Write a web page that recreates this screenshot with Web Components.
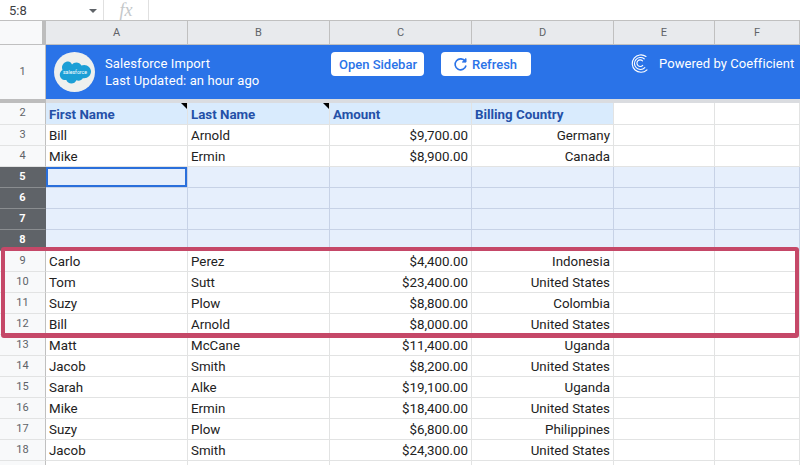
<!DOCTYPE html>
<html>
<head>
<meta charset="utf-8">
<style>
  html, body { margin: 0; padding: 0; background: #fff; overflow: hidden; }
  body { font-family: Roboto, "Liberation Sans", sans-serif; }
</style>
</head>
<body>
<sheet-app></sheet-app>
<script>
const Colors = {
    line: '#e2e3e3',
    headBg: '#f8f9fa',
    headLine: '#c0c0c0',
    colBg: '#e8eaed',
    selBg: '#e6effc',
    selLine: '#c7d2e6',
    dark: '#5f6368',
    blue: '#2a73e8',
    titleBg: '#d9ebfd',
    titleFg: '#2450a8',
};

class FormulaBar extends HTMLElement {
    constructor() {
        super();
        this.attachShadow({ mode: 'open' }).innerHTML = `
        <style>
          :host { display: flex; height: 20px; background: #fff; align-items: center; font-size: 13px; color: #3c4043; }
          .name { width: 103px; padding-left: 9px; box-sizing: border-box; display: flex; justify-content: space-between; align-items: center; height: 100%; }
          .caret { width: 0; height: 0; border-top: 4px solid #5f6368; border-left: 4px solid transparent; border-right: 4px solid transparent; margin-right: 6px; margin-top: 1px; }
          .fx { width: 44px; height: 100%; border-left: 1px solid #e0e0e0; border-right: 1px solid #e0e0e0; display: flex; align-items: center; justify-content: center; font: italic 18px "Liberation Serif", serif; color: #c4c7ca; }
        </style>
        <div class="name"><span>5:8</span><span class="caret"></span></div>
        <div class="fx">fx</div>`;
    }
}

class ImportBanner extends HTMLElement {
    constructor() {
        super();
        this.attachShadow({ mode: 'open' }).innerHTML = `
        <style>
          :host { display: flex; background: ${Colors.blue}; color: #fff; font-size: 13px; box-sizing: border-box; padding: 7px 0 0 8px; align-items: flex-start; }
          .logo { width: 41px; height: 40px; flex: none; border-radius: 50%; background: #eef0ee; display: flex; align-items: center; justify-content: center; }
          .title { margin-left: 10px; width: 226px; flex: none; line-height: 16.500px; letter-spacing: .1px; padding-top: 4px; }
          button { font: 500 13px Roboto, sans-serif; color: ${Colors.blue}; background: #fff; border: 0; border-radius: 4px; height: 24px; padding: 0; display: flex; align-items: center; justify-content: center; flex: none; }
          .open { width: 93px; padding-left: 1px; }
          .refresh { width: 90px; margin-left: 17px; gap: 4px; padding-right: 2px; }
          .brand { display: flex; align-items: center; margin-left: 98px; height: 20px; gap: 11px; font-size: 13px; letter-spacing: .07px; white-space: nowrap; margin-top: 1px; }
        </style>
        <div class="logo">
          <svg width="32" height="24" viewBox="0 0 32 24">
            <path fill="#1b9fd6" d="M13 4.500c1-1.300 2.600-2 4.300-2 2.200 0 4.100 1.200 5.100 3 .9-.4 1.800-.6 2.800-.6 3.800 0 6.800 3 6.800 6.700s-3 6.700-6.800 6.700c-.5 0-.9 0-1.400-.1-.8 1.500-2.500 2.500-4.300 2.500-.8 0-1.500-.2-2.100-.5-.8 2-2.800 3.300-5 3.300-2.300 0-4.300-1.400-5.100-3.500-.4.1-.7.1-1.100.1C3.200 20.100.8 17.700.8 14.700c0-2 1.100-3.700 2.700-4.600-.3-.8-.5-1.600-.5-2.500C3 4.200 5.800 1.500 9.200 1.500c1.600 0 3 .9 3.800 3z"/>
            <text x="16" y="13.500" text-anchor="middle" font-family="Roboto, sans-serif" font-size="5.200" fill="#fff">salesforce</text>
          </svg>
        </div>
        <div class="title"><div>Salesforce Import</div><div>Last Updated: an hour ago</div></div>
        <button class="open">Open Sidebar</button>
        <button class="refresh">
          <svg width="15" height="15" viewBox="0 0 15 15" fill="none" stroke="${Colors.blue}" stroke-width="1.600">
            <path d="M12.200 4.300A5.500 5.500 0 1 0 13 8.500"/>
            <path d="M13 1.500v3.600H9.400z" stroke-width="1" fill="${Colors.blue}"/>
          </svg>
          Refresh
        </button>
        <div class="brand">
          <svg width="19" height="20" viewBox="0 0 19 20" fill="none" stroke="#fff" stroke-width="1.100" stroke-linecap="round">
            <path d="M17 3.500A8.700 8.700 0 1 0 18 16.800"/>
            <path d="M15.200 5.800A6 6 0 1 0 15.800 14.600"/>
            <path d="M13.500 7.800A3.300 3.300 0 1 0 13.700 12.400"/>
          </svg>
          Powered by Coefficient
        </div>`;
    }
}

class SheetGrid extends HTMLElement {
    constructor() {
        super();
        this.attachShadow({ mode: 'open' }).innerHTML = `
        <style>
          :host { display: grid; grid-template-columns: 46px 142px 142px 142px 142px 101px 85px; grid-template-rows: 24px 54px 4px 22px; grid-auto-rows: 21px; font-size: 13.330px; color: #222; }
          .cell { box-sizing: border-box; border-right: 1px solid ${Colors.line}; border-bottom: 1px solid ${Colors.line}; padding: 0 3px; line-height: 22px; white-space: nowrap; overflow: hidden; position: relative; }
          .num { background: ${Colors.headBg}; border-right: 1px solid #c0c0c0; text-align: center; color: #5f6368; font-size: 11px; padding: 0; line-height: 20px; }
          .num.on { background: ${Colors.dark}; color: #fff; font-weight: 700; border-color: ${Colors.dark}; border-bottom-color: #8a8d90; }
          .corner { background: ${Colors.headBg}; box-sizing: border-box; border-right: 4px solid #bdbdbd; border-bottom: 1px solid #c0c0c0; }
          .col { background: ${Colors.colBg}; border-right: 1px solid #c0c0c0; border-bottom: 1px solid #c0c0c0; text-align: center; line-height: 23px; font-size: 11px; color: #5f6368; padding: 0; }
          .r { text-align: right; }
          .sel { background: ${Colors.selBg}; border-right-color: ${Colors.selLine}; border-bottom-color: ${Colors.selLine}; }
          .active { box-shadow: inset 0 0 0 2px #2a6fdb; }
          .th { background: ${Colors.titleBg}; color: ${Colors.titleFg}; font-weight: 700; line-height: 23px; }
          .note::after { content: ''; position: absolute; right: 0; top: 0; border-top: 6px solid #000; border-left: 6px solid transparent; }
          .banner-num { display: flex; align-items: center; justify-content: center; border-bottom: 0; }
          import-banner { grid-column: 2 / -1; }
          .freeze { grid-column: 1 / -1; display: flex; }
          .freeze i { background: #dadce0; flex: 1; }
          .freeze i:first-child { flex: none; width: 46px; background: #bdbdbd; }
        </style>
        <div id="grid" style="display:contents"></div>`;
        this.render();
    }
    render() {
        const rows = [
            ['Bill', 'Arnold', '$9,700.00', 'Germany'],
            ['Mike', 'Ermin', '$8,900.00', 'Canada'],
            null, null, null, null,
            ['Carlo', 'Perez', '$4,400.00', 'Indonesia'],
            ['Tom', 'Sutt', '$23,400.00', 'United States'],
            ['Suzy', 'Plow', '$8,800.00', 'Colombia'],
            ['Bill', 'Arnold', '$8,000.00', 'United States'],
            ['Matt', 'McCane', '$11,400.00', 'Uganda'],
            ['Jacob', 'Smith', '$8,200.00', 'United States'],
            ['Sarah', 'Alke', '$19,100.00', 'Uganda'],
            ['Mike', 'Ermin', '$18,400.00', 'United States'],
            ['Suzy', 'Plow', '$6,800.00', 'Philippines'],
            ['Jacob', 'Smith', '$24,300.00', 'United States'],
        ];
        let html = '<div class="corner"></div>';
        'ABCDEF'.split('').forEach((c) => { html += `<div class="cell col">${c}</div>`; });
        html += '<div class="cell num banner-num">1</div><import-banner></import-banner>';
        html += '<div class="freeze"><i></i><i></i></div>';
        html += '<div class="cell num">2</div>';
        html += '<div class="cell th note">First Name</div><div class="cell th note">Last Name</div><div class="cell th">Amount</div><div class="cell th">Billing Country</div><div class="cell"></div><div class="cell"></div>';
        rows.forEach((row, i) => {
            const n = i + 3;
            if (!row) {
                html += `<div class="cell num on">${n}</div>`;
                for (let c = 0; c < 6; c++) {
                    const active = n === 5 && c === 0 ? ' active' : '';
                    html += `<div class="cell sel${active}"></div>`;
                }
                return;
            }
            html += `<div class="cell num">${n}</div>`;
            html += `<div class="cell">${row[0]}</div><div class="cell">${row[1]}</div>`;
            html += `<div class="cell r">${row[2]}</div><div class="cell r">${row[3]}</div>`;
            html += '<div class="cell"></div><div class="cell"></div>';
        });
        html += '<div class="cell num"></div><div class="cell"></div><div class="cell"></div><div class="cell"></div><div class="cell"></div><div class="cell"></div><div class="cell"></div>';
        this.shadowRoot.getElementById('grid').innerHTML = html;
    }
}

class SheetApp extends HTMLElement {
    constructor() {
        super();
        this.attachShadow({ mode: 'open' }).innerHTML = `
        <style>
          :host { display: block; position: relative; width: 800px; height: 465px; overflow: hidden; background: #fff; }
          formula-bar { border-bottom: 1px solid #c0c0c0; }
          .mark { position: absolute; left: 1px; top: 247px; width: 798px; height: 91px; box-sizing: border-box; border: 4px solid #c54868; border-width: 4px 4px 5px 4px; border-radius: 3px; }
        </style>
        <formula-bar></formula-bar>
        <sheet-grid></sheet-grid>
        <div class="mark"></div>`;
    }
}

customElements.define('formula-bar', FormulaBar);
customElements.define('import-banner', ImportBanner);
customElements.define('sheet-grid', SheetGrid);
customElements.define('sheet-app', SheetApp);
</script>
</body>
</html>
